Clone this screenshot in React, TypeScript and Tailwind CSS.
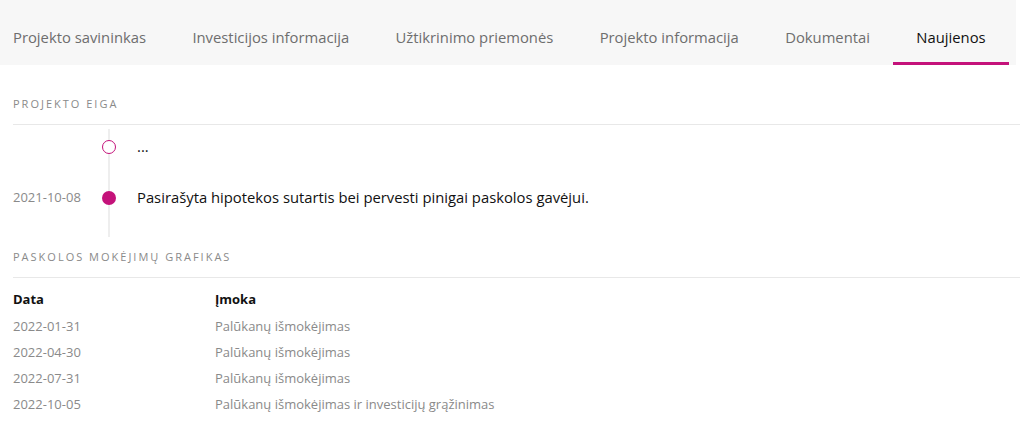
import React from "react";

const tabs = [
  "Projekto savininkas",
  "Investicijos informacija",
  "Užtikrinimo priemonės",
  "Projekto informacija",
  "Dokumentai",
  "Naujienos",
];

const payments = [
  { date: "2022-01-31", type: "Palūkanų išmokėjimas" },
  { date: "2022-04-30", type: "Palūkanų išmokėjimas" },
  { date: "2022-07-31", type: "Palūkanų išmokėjimas" },
  { date: "2022-10-05", type: "Palūkanų išmokėjimas ir investicijų grąžinimas" },
];

const SectionTitle: React.FC<{ title: string }> = ({ title }) => (
  <div className="border-b border-[#e8e8e8] pb-[13px] text-[11px] leading-[15px] tracking-[2px] text-[#8a8a8a] uppercase">
    {title}
  </div>
);

const App: React.FC = () => {
  const active = "Naujienos";

  return (
    <div
      className="w-[1023px] h-[426px] bg-white overflow-hidden"
      style={{ fontFamily: '"Open Sans", "Noto Sans", sans-serif' }}
    >
      {/* tabs */}
      <div className="flex h-[65px] w-[1016px] bg-[#f7f7f7]">
        {tabs.map((tab, i) => (
          <div
            key={tab}
            className={`flex flex-none items-center whitespace-nowrap h-full px-[23.2px] pt-[13px] text-[14.8px] border-b-[3px] ${
              i === 0 ? "pl-[13px]" : ""
            } ${
              tab === active
                ? "border-[#c4127a] text-[#111]"
                : "border-transparent text-[#6e6e6e]"
            }`}
          >
            {tab}
          </div>
        ))}
      </div>

      <div className="pl-[13px] pr-[3px]">
        {/* projekto eiga */}
        <div className="pt-[31px]">
          <SectionTitle title="Projekto eiga" />
          <div className="relative">
            <div className="absolute left-[95px] top-[4px] bottom-0 w-[2px] bg-[#eeeeee]" />
            <div className="flex items-center h-[41px] pt-[2px]">
              <div className="w-[89px] text-[13px] text-[#8a8a8a]"></div>
              <div className="relative w-[35px] flex justify-start">
                <span className="block w-[14px] h-[14px] rounded-full border-[1.5px] border-[#c4127a] bg-white" />
              </div>
              <div className="text-[14.8px] text-[#111]">...</div>
            </div>
            <div className="flex items-center h-[53px] pt-[10px]">
              <div className="w-[89px] text-[13px] text-[#8a8a8a]">2021-10-08</div>
              <div className="relative w-[35px] flex justify-start">
                <span className="block w-[14px] h-[14px] rounded-full bg-[#c4127a]" />
              </div>
              <div className="text-[14.8px] text-[#111]">
                Pasirašyta hipotekos sutartis bei pervesti pinigai paskolos gavėjui.
              </div>
            </div>
            <div className="h-[18px]" />
          </div>
        </div>

        {/* mokejimu grafikas */}
        <div className="pt-[12px]">
          <SectionTitle title="Paskolos mokėjimų grafikas" />
          <table className="text-[13px] mt-[10px] border-collapse">
            <thead>
              <tr className="h-[26px]">
                <th className="w-[202px] pb-[3px] text-left font-bold text-[#111]">Data</th>
                <th className="pb-[3px] text-left font-bold text-[#111]">Įmoka</th>
              </tr>
            </thead>
            <tbody>
              {payments.map((p) => (
                <tr key={p.date} className="h-[26px] text-[#8a8a8a]">
                  <td>{p.date}</td>
                  <td>{p.type}</td>
                </tr>
              ))}
            </tbody>
          </table>
        </div>
      </div>
    </div>
  );
};

export default App;
